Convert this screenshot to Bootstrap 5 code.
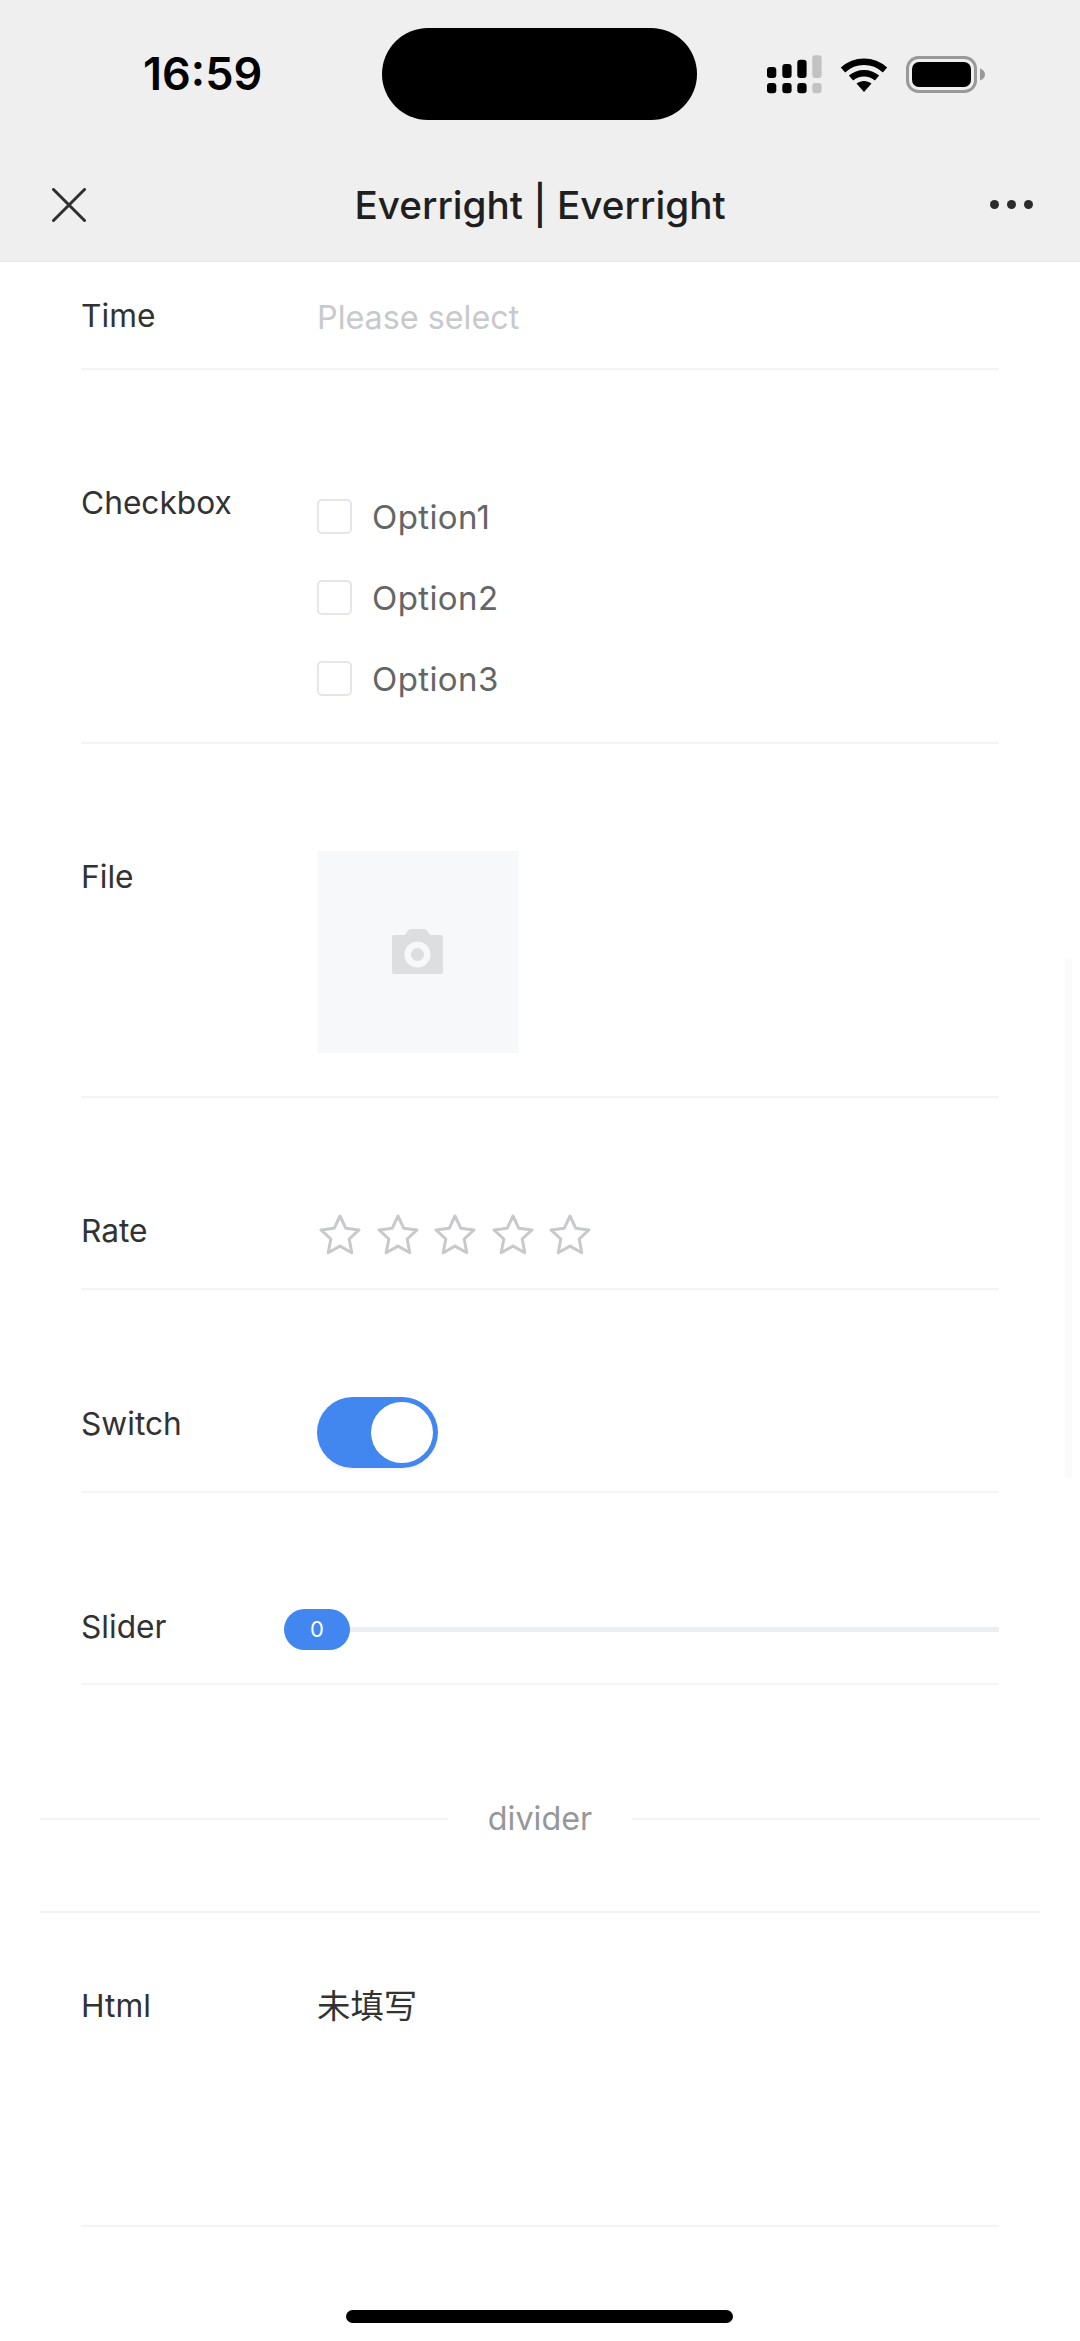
<!doctype html>
<html lang="en">
<head>
<meta charset="utf-8">
<title>Everright | Everright</title>
<link href="https://cdn.jsdelivr.net/npm/bootstrap@5.3.0/dist/css/bootstrap.min.css" rel="stylesheet">
<style>
html,body{background:#fff;margin:0}
body{width:1080px;height:2341px;overflow:hidden;position:relative;font-family:Inter,"Noto Sans CJK SC",sans-serif;color:#323233;font-size:31.7px;line-height:40px}
.topbar{background:#efefef;height:262px;border-bottom:1px solid #e8e8e8}
.statusrow{height:148px}
.clock{width:382px;flex:none;font-size:45px;font-weight:600;color:#000;line-height:50px;padding-left:143px}
.island{width:315px;height:92px;background:#000;border-radius:46px;flex:none}
.statusicons{padding-left:70px;gap:18px}
.navrow{height:113px;padding:0 47px}
.navtitle{font-size:38.7px;font-weight:500;color:#1f1f1f;line-height:50px}
.navside{flex:1 1 0}
.closeicon{margin-left:5px}
.dots{gap:8px}
.dots i{width:9px;height:9px;background:#2b2b2b;border-radius:50%;display:block}
.field{margin:0 81px;border-bottom:2px solid #f4f4f5}
.fieldlabel{width:236px;flex:none}
.f-time{height:108px;padding-top:34px}
.f-check{height:374px;padding-top:112.5px}
.f-file{height:354px;padding-top:106.5px}
.f-file .fieldlabel{margin-top:6px}
.f-rate{height:192px;padding-top:112.5px}
.f-switch{height:203px;padding-top:113.5px}
.f-slider{height:192px;padding-top:113.5px}
.f-html{height:314px;padding-top:73px}
.hinttext{color:#c8c9cc;margin-top:2px;font-size:32.3px}
.optionlist{margin-top:-6.5px;padding-top:20px}
.optionitem{height:81px;color:#646566;gap:20px;margin-top:-20px;margin-bottom:20px;font-size:33px;letter-spacing:.4px}
.tick{width:35px;height:35px;border:2px solid #e4e6eb;border-radius:5px;background:#fff;flex:none}
.uploader{width:202px;height:202px;background:#f7f8fa}
.uploader svg{margin-right:2px}
.stars{gap:15.6px;margin-top:3px;margin-left:2px}
.toggle{width:121px;height:71px;background:#4287f0;border-radius:36px;padding:5px;margin-top:-7px;box-shadow:0 2px 4px rgba(0,0,0,.06)}
.knob{width:62px;height:61px;background:#fff;border-radius:50%}
.sliderbox{flex:1;margin-left:-33px;margin-top:2.5px;height:41px}
.handle{width:66px;height:41px;background:#4287f0;color:#fff;border-radius:21px;font-size:22px;line-height:41px;flex:none}
.track{height:5px;background:#ebedf0;flex:1}
.dividerrow{margin:0 40px;height:226px;padding:114px 0 72px;color:#969799;gap:40px;font-size:32.3px}
.dividerline{height:2px;background:#f2f3f5;flex:1}
.rule{height:2px;background:#f4f4f5;margin:0 40px}
.cjktext{font-size:33.4px}
.scrollthumb{position:absolute;left:1065px;top:958px;width:7px;height:520px;background:#fbfbfb;border-radius:4px}
.homebar{position:absolute;left:346px;top:2310px;width:387px;height:13px;background:#000;border-radius:7px}
</style>
</head>
<body>
<header class="topbar">
  <div class="statusrow d-flex align-items-center">
    <div class="clock">16:59</div>
    <div class="island"></div>
    <div class="statusicons d-flex align-items-center">
      <svg width="55" height="39" viewBox="0 0 55 39" aria-hidden="true">
        <g fill="#000"><rect x="0" y="12" width="9.3" height="11" rx="3"/><rect x="15.3" y="9" width="9.3" height="14" rx="3"/><rect x="30.3" y="4.7" width="9.3" height="18.3" rx="3"/><rect x="0" y="28" width="9.3" height="10.3" rx="3"/><rect x="15.3" y="28" width="9.3" height="10.3" rx="3"/><rect x="30.3" y="28" width="9.3" height="10.3" rx="3"/></g>
        <g fill="#c2c2c2"><rect x="45.3" y="0.3" width="9.3" height="22.7" rx="3"/><rect x="45.3" y="28" width="9.3" height="10.3" rx="3"/></g>
      </svg>
      <svg width="48" height="36" viewBox="0 0 48 36" aria-hidden="true">
        <path d="M3 14C15 3 33 3 45 14" fill="none" stroke="#000" stroke-width="6.5"/>
        <path d="M11 22C18.500 15.500 29.500 15.500 37 22" fill="none" stroke="#000" stroke-width="6.5"/>
        <path d="M16.500 27.500C21 24 27 24 31.500 27.500L24 36Z" fill="#000"/>
      </svg>
      <svg width="79" height="37" viewBox="0 0 79 37" aria-hidden="true">
        <rect x="1.500" y="1.500" width="68" height="34" rx="11" fill="none" stroke="#999" stroke-width="3"/>
        <rect x="6" y="6" width="59" height="25" rx="7" fill="#000"/>
        <path d="M74 12.500C77 13.500 79 15.500 79 18.500S77 23.500 74 24.500Z" fill="#999"/>
      </svg>
    </div>
  </div>
  <nav class="navrow d-flex align-items-center">
    <div class="navside">
      <svg width="34" height="34" viewBox="0 0 34 34" class="d-block closeicon" aria-hidden="true"><path d="M1.500 1.500L32.500 32.500M32.500 1.500L1.500 32.500" stroke="#2f2f2f" stroke-width="3" stroke-linecap="round"/></svg>
    </div>
    <div class="navtitle">Everright | Everright</div>
    <div class="navside dots d-flex justify-content-end"><i></i><i></i><i></i></div>
  </nav>
</header>

<main>
  <div class="field f-time d-flex"><div class="fieldlabel">Time</div><div class="hinttext">Please select</div></div>

  <div class="field f-check d-flex">
    <div class="fieldlabel">Checkbox</div>
    <div class="optionlist">
      <div class="optionitem d-flex align-items-center"><span class="tick"></span>Option1</div>
      <div class="optionitem d-flex align-items-center"><span class="tick"></span>Option2</div>
      <div class="optionitem d-flex align-items-center"><span class="tick"></span>Option3</div>
    </div>
  </div>

  <div class="field f-file d-flex">
    <div class="fieldlabel">File</div>
    <div class="uploader d-flex align-items-center justify-content-center">
      <svg width="51" height="45" viewBox="0 0 51 45" aria-hidden="true">
        <path d="M2 6H13L16 1.500Q17 0 19 0H32Q34 0 35 1.500L38 6H49Q51 6 51 8V43Q51 45 49 45H2Q0 45 0 43V8Q0 6 2 6Z" fill="#dcdee0"/>
        <circle cx="25.500" cy="25.500" r="13" fill="#f7f8fa"/><circle cx="25.500" cy="25.500" r="6.500" fill="#dcdee0"/>
      </svg>
    </div>
  </div>

  <div class="field f-rate d-flex">
    <div class="fieldlabel">Rate</div>
    <div class="stars d-flex">
      <svg width="42" height="41" viewBox="0 0 42 41" aria-hidden="true"><path d="M21 2L26.700 14.200L40 15.900L30.200 25L32.800 38.700L21 32.100L9.200 38.700L11.800 25L2 15.900L15.300 14.200Z" fill="none" stroke="#c8c9cc" stroke-width="3" stroke-linejoin="round"/></svg>
      <svg width="42" height="41" viewBox="0 0 42 41" aria-hidden="true"><path d="M21 2L26.700 14.200L40 15.900L30.200 25L32.800 38.700L21 32.100L9.200 38.700L11.800 25L2 15.900L15.300 14.200Z" fill="none" stroke="#c8c9cc" stroke-width="3" stroke-linejoin="round"/></svg>
      <svg width="42" height="41" viewBox="0 0 42 41" aria-hidden="true"><path d="M21 2L26.700 14.200L40 15.900L30.200 25L32.800 38.700L21 32.100L9.200 38.700L11.800 25L2 15.900L15.300 14.200Z" fill="none" stroke="#c8c9cc" stroke-width="3" stroke-linejoin="round"/></svg>
      <svg width="42" height="41" viewBox="0 0 42 41" aria-hidden="true"><path d="M21 2L26.700 14.200L40 15.900L30.200 25L32.800 38.700L21 32.100L9.200 38.700L11.800 25L2 15.900L15.300 14.200Z" fill="none" stroke="#c8c9cc" stroke-width="3" stroke-linejoin="round"/></svg>
      <svg width="42" height="41" viewBox="0 0 42 41" aria-hidden="true"><path d="M21 2L26.700 14.200L40 15.900L30.200 25L32.800 38.700L21 32.100L9.200 38.700L11.800 25L2 15.900L15.300 14.200Z" fill="none" stroke="#c8c9cc" stroke-width="3" stroke-linejoin="round"/></svg>
    </div>
  </div>

  <div class="field f-switch d-flex">
    <div class="fieldlabel">Switch</div>
    <div class="toggle d-flex justify-content-end"><div class="knob"></div></div>
  </div>

  <div class="field f-slider d-flex">
    <div class="fieldlabel">Slider</div>
    <div class="sliderbox d-flex align-items-center">
      <div class="handle text-center">0</div>
      <div class="track"></div>
    </div>
  </div>

  <div class="dividerrow d-flex align-items-center"><div class="dividerline"></div><div>divider</div><div class="dividerline"></div></div>
  <div class="rule"></div>
  <div class="field f-html d-flex"><div class="fieldlabel">Html</div><div class="cjktext">未填写</div></div>
</main>
<div class="scrollthumb"></div>
<div class="homebar"></div>
</body>
</html>
